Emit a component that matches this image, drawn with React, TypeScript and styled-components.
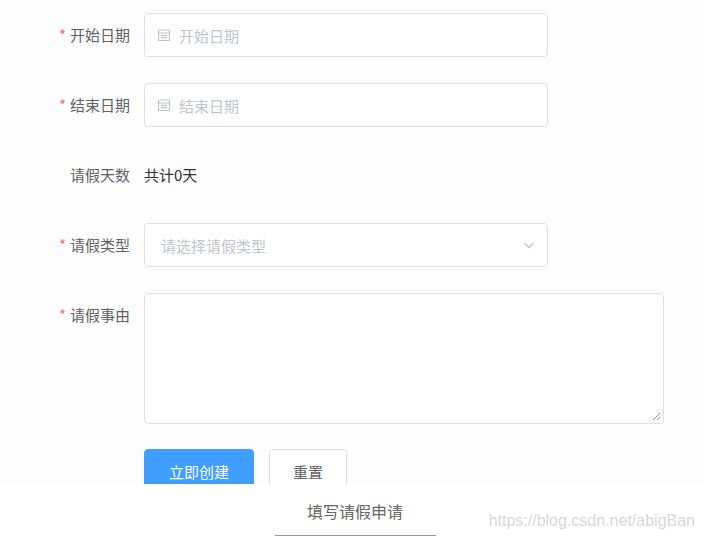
import styled, { createGlobalStyle } from 'styled-components';

const Global = createGlobalStyle`
  body { margin: 0; background: #fff; font-family: "Noto Sans CJK SC", "Liberation Sans", sans-serif; }
`;

const Form = styled.div`
  height: 484px;
  overflow: hidden;
  background: #fdfdfe;
  padding-top: 13px;
  box-sizing: border-box;
`;

const Row = styled.div<{ $gap: number }>`
  display: flex;
  align-items: flex-start;
  margin-bottom: ${({ $gap }) => $gap}px;
`;

const Label = styled.div<{ $h: number }>`
  flex: none;
  padding-right: 14px;
  box-sizing: border-box;
  width: 144px;
  text-align: right;
  font-size: 15px;
  color: #606266;
  line-height: ${({ $h }) => $h}px;
`;

const Star = styled.span`
  color: #f56c6c;
  margin-right: 4px;
`;

const Box = styled.div<{ $w: number; $h: number }>`
  width: ${({ $w }) => $w}px;
  height: ${({ $h }) => $h}px;
  box-sizing: border-box;
  border: 1px solid #dcdfe6;
  border-radius: 4px;
  background: #fff;
  display: flex;
  align-items: center;
  padding: 0 12px;
  gap: 8px;
  font-size: 15px;
  color: #c0c4cc;
  position: relative;
`;

const Value = styled.div`
  line-height: 44px;
  font-size: 15px;
  color: #303133;
`;

const Grow = styled.span`flex: 1;`;

const Resize = styled.svg`
  position: absolute;
  right: 2px;
  bottom: 2px;
`;

const Buttons = styled.div`
  display: flex;
  gap: 15px;
  padding-left: 144px;
`;

const Button = styled.button<{ $primary?: boolean }>`
  width: ${({ $primary }) => ($primary ? 110 : 78)}px;
  height: 44px;
  border-radius: 4px;
  font-size: 15px;
  font-family: inherit;
  border: 1px solid ${({ $primary }) => ($primary ? '#409eff' : '#dcdfe6')};
  background: ${({ $primary }) => ($primary ? '#409eff' : '#fff')};
  color: ${({ $primary }) => ($primary ? '#fff' : '#606266')};
`;

const Caption = styled.div`
  position: relative;
  height: 56px;
  display: flex;
  justify-content: center;
`;

const CaptionText = styled.div`
  margin-top: 15px;
  font-size: 16px;
  color: #666;
  width: 161px;
  text-align: center;
  border-bottom: 1px solid #999;
  height: 36px;
  margin-left: 7px;
`;

const Watermark = styled.div`
  position: absolute;
  right: 8px;
  top: 28px;
  font-size: 16px;
  color: #d8d8d8;
  font-family: "Liberation Sans", sans-serif;
`;

const Cal = () => (
  <svg width="14" height="14" viewBox="0 0 14 14" fill="none" stroke="#c0c4cc" strokeWidth="1.2">
    <rect x="1.5" y="2" width="11" height="10.5" rx="1" />
    <path d="M1.5 5h11M4 7.3h6M4 9.6h6" />
  </svg>
);

export default function App() {
  return (
    <>
      <Global />
      <Form>
        <Row $gap={26}>
          <Label $h={44}><Star>*</Star>开始日期</Label>
          <Box $w={404} $h={44}><Cal />开始日期</Box>
        </Row>
        <Row $gap={26}>
          <Label $h={44}><Star>*</Star>结束日期</Label>
          <Box $w={404} $h={44}><Cal />结束日期</Box>
        </Row>
        <Row $gap={26}>
          <Label $h={44}>请假天数</Label>
          <Value>共计0天</Value>
        </Row>
        <Row $gap={26}>
          <Label $h={44}><Star>*</Star>请假类型</Label>
          <Box $w={404} $h={44} style={{ paddingLeft: 16 }}>
            <Grow>请选择请假类型</Grow>
            <svg width="12" height="12" viewBox="0 0 12 12" fill="none" stroke="#c0c4cc" strokeWidth="1.3">
              <path d="M1.5 4l4.5 4.5L10.5 4" />
            </svg>
          </Box>
        </Row>
        <Row $gap={25}>
          <Label $h={44}><Star>*</Star>请假事由</Label>
          <Box $w={520} $h={131}>
            <Resize width="9" height="9" viewBox="0 0 9 9" stroke="#888" strokeWidth="1">
              <path d="M8 1L1 8M8 5L5 8" />
            </Resize>
          </Box>
        </Row>
        <Buttons>
          <Button $primary>立即创建</Button>
          <Button>重置</Button>
        </Buttons>
      </Form>
      <Caption>
        <CaptionText>填写请假申请</CaptionText>
        <Watermark>https://blog.csdn.net/abigBan</Watermark>
      </Caption>
    </>
  );
}
